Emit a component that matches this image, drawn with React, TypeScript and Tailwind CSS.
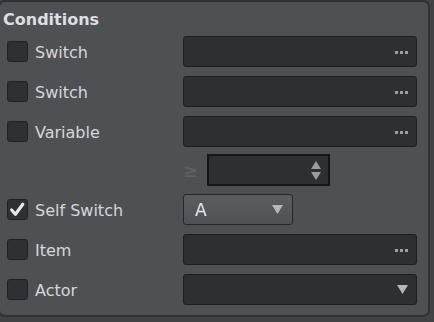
import React from 'react';

const font = { fontFamily: '"DejaVu Sans", Verdana, sans-serif' };

const Check = ({ checked }: { checked?: boolean }) => (
    <div className="w-[21px] h-[21px] rounded-[3px] bg-[#2e3133] border border-[#202224] flex items-center justify-center shrink-0">
        {checked && (
            <svg width="17" height="17" viewBox="0 0 16 16">
                <path d="M2.5 8.5 L6 12.5 L13 3" fill="none" stroke="#e6e6e6" strokeWidth="3" strokeLinecap="round" strokeLinejoin="round" />
            </svg>
        )}
    </div>
);

const Dots = () => (
    <div className="flex gap-[2px] mt-[3px]">
        <span className="w-[3px] h-[3px] bg-[#9c9ea0]" />
        <span className="w-[3px] h-[3px] bg-[#9c9ea0]" />
        <span className="w-[3px] h-[3px] bg-[#9c9ea0]" />
    </div>
);

const Arrow = () => (
    <svg width="11" height="9" viewBox="0 0 11 9">
        <path d="M0 0 H11 L5.5 9 Z" fill="#b4b6b8" />
    </svg>
);

const Field = ({ children }: { children?: React.ReactNode }) => (
    <div className="w-[234px] h-[31px] rounded-[3px] bg-[#2d3033] border border-[#1c1e20] flex items-center justify-end pr-[8px]">
        {children}
    </div>
);

const Row = ({ label, checked, children }: { label?: string; checked?: boolean; children: React.ReactNode }) => (
    <div className="flex items-center h-[40px]">
        <div className="w-[183px] flex items-center pl-[7px] gap-[7px]">
            {label && <Check checked={checked} />}
            {label && <span className="text-[16px] text-[#d6d7d8] leading-none pt-[3px]">{label}</span>}
        </div>
        {children}
    </div>
);

export default function App() {
    return (
        <div className="w-[434px] h-[322px] bg-[#404245] overflow-hidden" style={font}>
            <div className="ml-[-2px] w-[432px] h-[317px] bg-[#4e5153] border-2 border-[#2f3133] rounded-[7px]">
                <div className="h-[29px] flex items-center pl-[3px] pt-[6px]">
                    <span className="text-[16px] font-bold text-[#dedfe0] leading-none">Conditions</span>
                </div>
                <Row label="Switch"><Field><Dots /></Field></Row>
                <Row label="Switch"><Field><Dots /></Field></Row>
                <Row label="Variable"><Field><Dots /></Field></Row>
                <div className="flex items-center h-[38px]">
                    <div className="w-[183px]" />
                    <span className="w-[24px] text-[18px] text-[#606365] leading-none pt-[2px]">≥</span>
                    <div className="w-[123px] h-[32px] bg-[#2d3033] border-2 border-[#151618] flex items-center justify-end pr-[7px]">
                        <div className="flex flex-col gap-[3px]">
                            <svg width="10" height="8" viewBox="0 0 10 8"><path d="M0 8 H10 L5 0 Z" fill="#9a9c9e" /></svg>
                            <svg width="10" height="8" viewBox="0 0 10 8"><path d="M0 0 H10 L5 8 Z" fill="#9a9c9e" /></svg>
                        </div>
                    </div>
                </div>
                <Row label="Self Switch" checked>
                    <div className="w-[110px] h-[31px] rounded-[3px] bg-gradient-to-b from-[#5a5d60] to-[#4f5255] border border-[#252729] flex items-center justify-between pl-[11px] pr-[9px]">
                        <span className="text-[17px] text-[#e4e5e6] leading-none pt-[2px]">A</span>
                        <Arrow />
                    </div>
                </Row>
                <Row label="Item"><Field><Dots /></Field></Row>
                <Row label="Actor"><Field><Arrow /></Field></Row>
            </div>
        </div>
    );
}
